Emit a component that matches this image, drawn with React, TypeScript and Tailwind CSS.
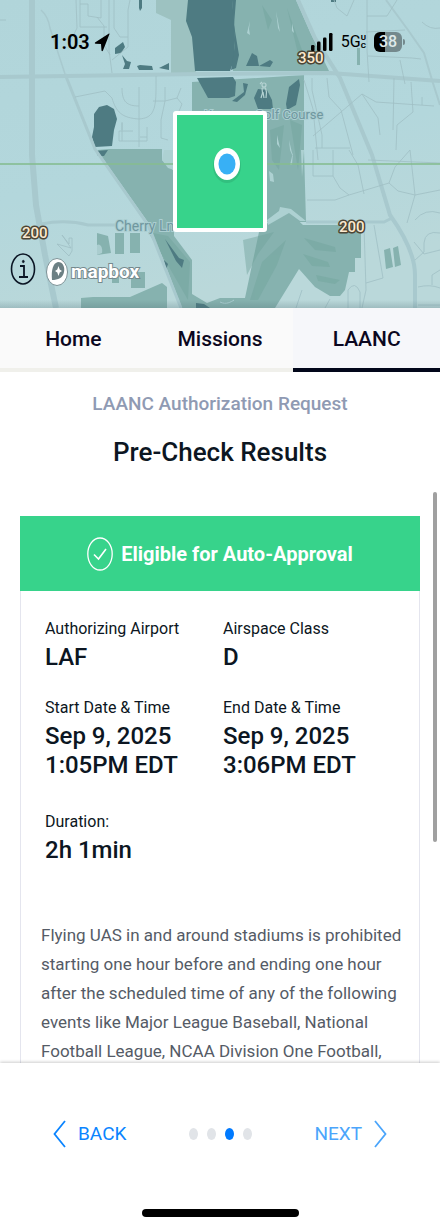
const tabs = [
  { name: 'Home', active: false },
  { name: 'Missions', active: false },
  { name: 'LAANC', active: true },
]

const details = [
  { label: 'Authorizing Airport', value: ['LAF'] },
  { label: 'Airspace Class', value: ['D'] },
  { label: 'Start Date & Time', value: ['Sep 9, 2025', '1:05PM EDT'] },
  { label: 'End Date & Time', value: ['Sep 9, 2025', '3:06PM EDT'] },
]

const steps = [1, 2, 3, 4]

function Map() {
  return (
    <svg
      viewBox="0 0 440 308"
      preserveAspectRatio="xMidYMid slice"
      className="block h-full w-full"
      aria-label="Map of the flight area"
    >
      <defs>
        <linearGradient id="ground" x1="0" y1="0" x2="0.3" y2="1">
          <stop offset="0" stopColor="#b1d5da" />
          <stop offset="0.6" stopColor="#b3d7dc" />
          <stop offset="1" stopColor="#bad8da" />
        </linearGradient>
        <linearGradient id="edge" x1="0" y1="0" x2="0" y2="1">
          <stop offset="0" stopColor="#4a6a70" stopOpacity="0" />
          <stop offset="1" stopColor="#4a6a70" stopOpacity="0.25" />
        </linearGradient>
      </defs>
      <rect width="440" height="308" fill="url(#ground)" />

      {/* Parks */}
      <path d="M156 0V13L171 20V73H196L190 0Z" fill="#9dc2c1" />
      <g fill="#86b2af">
        <path d="M230 0H296L310 32L329 71H233Z" />
        <path d="M192 82L304 75V150L306 222H267V111H192Z" />
        <path d="M109 149H162V160L174 171V236L192 260V294L207 303L220 298H245L259 232L282 208L290 213L303 225H361V258H355V272H349L345 290L340 296H330L315 287L299 269L275 308H182L150 225L97 150Z" />
        <path d="M97 233L108 236L111 253L97 255ZM115 233H124V254H115ZM130 233H140V253H130ZM131 272H145V288H131ZM112 275H119V283H112Z" />
        <path d="M81 308V298L93 297H130L162 283L167 287V308Z" />
        <path d="M384 250L390 248L393 267L386 269ZM393 248L398 246L401 265L395 267Z" />
        <path d="M110 149H162V156H107Z" />
        <path d="M357 48H360V65H357Z" />
      </g>
      <g fill="#71a39c" opacity="0.45">
        <path d="M243 240L274 232L258 254L247 275ZM262 262L286 240L277 265L258 300L250 300ZM304 238L335 247L336 252L315 250ZM303 254L328 262L330 267L312 266ZM316 275L340 280L335 284L318 281Z" />
        <path d="M262 5L272 20L268 30ZM287 8L302 50L300 62ZM270 130L284 125L279 170L272 160ZM290 120L302 125L298 170Z" />
        <path d="M148 232L168 236L190 262L188 300L165 260Z" />
      </g>

      {/* Water */}
      <g fill="#4e7b82">
        <path d="M188 0H232L234 20L235 40L234 60L230 71H195L192 37L186 21Z" />
        <path d="M197 78L233 77L236 82L235 96L229 98L208 98Z" />
        <path d="M94 114L99 107L107 105L114 109L117 119L114 130L112 146L95 147L92 137L94 127Z" />
        <path d="M96 151L108 150L104 156L98 156Z" />
        <path d="M115 48L123 42L125 47L121 53L115 54ZM122 55L127 61L131 62L129 69L123 69L125 64ZM137 66L140 65L152 66L153 70L139 70ZM159 68L169 63V70Z" />
        <path d="M139 0H142V8L140 11L139 8Z" />
        <path d="M232 0L236 0L234 25L239 55L236 68L231 70L235 45Z" />
        <path d="M246 66L252 53L257 56L259 66ZM259 66L270 60L273 62L270 67Z" />
        <path d="M232 101L244 92L243 83L248 84L245 95L237 102ZM258 89L267 90L272 100L273 109H258L254 98ZM289 87L299 79L300 85L296 105L287 110L286 104Z" />
        <path d="M165 239L179 258L184 260L182 268L176 261ZM164 260L168 264L166 270ZM196 303L204 304L210 308H196Z" />
        <path d="M331 0H336V2H331Z" />
      </g>
      <g fill="#add1d2">
        <path d="M247 33L250 21L249 29L250 35ZM276 11L280 32L278 28ZM292 23L294 33L292 31ZM277 135L280 148L277 144ZM289 140L293 157L290 150ZM269 171L273 174L274 182L270 181ZM290 165L293 152L292 165ZM301 150L304 150L302 177Z" />
        <path d="M267 220L279 211L280 207L291 209L306 221H300L289 213L268 225Z" />
        <path d="M164 150H174V170L168 168L162 160Z" />
      </g>
      <path d="M97 245C100 243 103 247 102 253L97 255Z" fill="#aacdcf" />
      <path d="M220 302C226 305 231 302 234 300" fill="none" stroke="#abced1" strokeWidth="1" />

      {/* Roads */}
      <g fill="none" stroke="#a8c9ce">
        <path d="M32 0V155L36 205L45 255L56 308" strokeWidth="6" />
        <path d="M0 77L200 74L330 73L440 81" strokeWidth="4" />
        <path d="M41 10Q48 16 50 28L65 74" strokeWidth="1.5" />
        <path d="M65 74L95 149L148 225L181 308" strokeWidth="3" />
        <path d="M298 0L315 38L340 78L372 155L390 215Q415 250 415 275V308" strokeWidth="4" />
        <path d="M386 0L408 30L424 53L432 80L440 105" strokeWidth="2" />
        <path d="M306 222H384L392 218" strokeWidth="3" />
        <path d="M41 224Q66 219 88 225H116" strokeWidth="3" />
      </g>
      <g fill="none" stroke="#9fbfc4" strokeWidth="0.8">
        <path d="M76 0L77 28L70 42M80 0V27H107M80 4H88V16L101 18V0M97 17L104 26V45L110 55M109 0V50L112 73M114 0V28L120 37H128V10L130 0M112 60L128 47V37M0 20H6" />
        <path d="M75 97L105 91L112 98C116 112 122 118 139 119C152 118 156 112 156 89V76M122 88C122 102 127 106 139 106M139 87V147M165 87V101M153 101H165L177 98L181 88M165 101L161 120V138L168 140M177 98L182 104L177 116V137L173 140M122 123V130M119 141V131H133M122 141V122M119 141H147V127M140 137H147" />
        <path d="M312 78V90L322 135V148M327 78L329 97L341 110L353 155M304 80L313 109L318 160M313 136L362 94L376 102L434 106M367 0V50L369 82M367 16H387L397 0M366 32L405 30M368 56L412 58L421 59M411 82L413 112L397 125L396 150M362 94L378 118L380 135M315 148H350M394 78L393 130M334 0L337 8L347 16L354 0M422 97V105M400 60L405 84M440 28Q430 30 422 22" />
        <path d="M313 150V176H333V150M333 176L340 188L349 195L389 183L395 167M349 150L358 165L364 194M307 200H335L349 195M389 183L398 191L415 195L440 190M395 167L410 150M410 150L415 195L407 223M368 160L440 163M364 226L366 290L362 308M374 225L383 278L366 283M415 220Q425 208 440 213M440 233Q425 230 424 243V252L415 260M414 242L424 254L440 250M418 287Q430 284 440 288M432 285V275L440 270M418 305H440M348 308V290Q355 280 360 292V308M302 290L296 308M330 299L325 308" />
        <path d="M62 235L71 248L57 244L69 256L72 251V238H69V244Z" />
      </g>

      <path d="M0 164H440" stroke="#86bd92" strokeWidth="2" opacity="0.8" />

      {/* Place names */}
      <g fill="#6f979f" stroke="#abced1" strokeWidth="2" paintOrder="stroke">
        <text x="204" y="119" fontSize="13">Kampen Golf Course</text>
        <text x="115" y="231" fontSize="14">Cherry Ln</text>
      </g>
      <g fill="none" stroke="#b5d3d3" strokeWidth="1.2">
        <circle cx="264" cy="85" r="2" />
        <path d="M260 84L262 82M262 88H265.500L266.500 92L266 98M262 88L262.500 93L261 98M263 92L264 98" />
      </g>

      {/* Authorization grid cell */}
      <rect x="175" y="113" width="90" height="117" rx="1" fill="#37d38b" stroke="#fff" strokeWidth="4" />
      <ellipse cx="227" cy="166" rx="14" ry="17" fill="#24885c" opacity="0.25" />
      <ellipse cx="227" cy="164" rx="13" ry="16" fill="#fff" />
      <ellipse cx="227" cy="164" rx="8.5" ry="10.5" fill="#38b0f5" />

      {/* Altitude ceilings */}
      <g
        fill="#fbe9cf"
        stroke="#4c4535"
        strokeWidth="3"
        strokeLinejoin="round"
        paintOrder="stroke"
        fontSize="15"
        fontWeight="500"
      >
        <text x="298" y="63">350</text>
        <text x="22" y="238">200</text>
        <text x="339" y="232">200</text>
      </g>

      {/* Attribution */}
      <g fill="none" stroke="#0b1524" strokeWidth="1.6">
        <ellipse cx="23" cy="269" rx="11.5" ry="15" />
        <path d="M20 266H24V277M19 277H28" strokeWidth="1.8" />
        <ellipse cx="23.3" cy="261.5" rx="1" ry="1.2" fill="#0b1524" strokeWidth="0.6" />
      </g>
      <ellipse cx="57" cy="272" rx="10.5" ry="13.5" fill="#fff" stroke="#7d9296" strokeWidth="1" />
      <path d="M52 280C51 270 53 263 58 262C63 262 65 267 64 272C63 278 58 280 52 280Z" fill="#6c8084" />
      <path d="M58.500 266L59.700 269.500L62 271L59.700 272.500L58.500 276L57.300 272.500L55 271L57.300 269.500Z" fill="#fff" />
      <text
        x="71"
        y="278"
        fontSize="19"
        fontWeight="700"
        fill="#fff"
        stroke="#75898d"
        strokeWidth="2"
        paintOrder="stroke"
      >
        mapbox
      </text>
      <rect y="300" width="440" height="8" fill="url(#edge)" />
    </svg>
  )
}

function StatusBar() {
  return (
    <div className="absolute inset-x-0 top-7 flex h-7 items-center justify-between pr-[35px] pl-[50px] text-black">
      <div className="flex items-center gap-1">
        <span className="text-xl font-semibold">1:03</span>
        <svg viewBox="0 0 16 20" className="h-5 w-4">
          <path d="M15 1.500L1 10.500Q0.300 11.500 1.500 11.800L7 12L7.500 18.500Q8 19.800 9 18.500L15.500 2Q15.600 1.200 15 1.500Z" />
        </svg>
      </div>
      <div className="flex items-center gap-2">
        <svg viewBox="0 0 22 18" className="h-[18px] w-[22px]">
          <rect x="0" y="12" width="3.500" height="6" rx="1.200" />
          <rect x="6" y="8.500" width="3.500" height="9.500" rx="1.200" />
          <rect x="12" y="4.500" width="3.500" height="13.500" rx="1.200" />
          <rect x="18" y="0" width="3.500" height="18" rx="1.200" />
        </svg>
        <div className="flex items-center">
          <span className="text-base">5G</span>
          <span className="flex flex-col text-[8px] leading-[8px] font-bold">
            <span>U</span>
            <span>C</span>
          </span>
        </div>
        <div className="flex items-center">
          <div className="flex h-5 w-7 items-center justify-center rounded-md bg-linear-to-r from-black from-38% to-[#74898d] to-38% text-base leading-5 font-medium text-[#dfe9ea]">
            38
          </div>
          <div className="ml-px h-1.5 w-0.5 rounded-r bg-[#74898d]" />
        </div>
      </div>
    </div>
  )
}

export default function App() {
  return (
    <div className="flex h-screen flex-col overflow-hidden bg-white font-[Roboto,sans-serif] text-[#0c1622]">
      <header className="relative h-[308px] shrink-0">
        <Map />
        <StatusBar />
      </header>

      <nav className="grid h-16 shrink-0 grid-cols-3">
        {tabs.map((tab) => (
          <a
            key={tab.name}
            href="#"
            className={
              tab.active
                ? 'flex items-center justify-center border-b-4 border-[#02071a] bg-[#f6f7fa] pt-1 text-[21px] font-medium text-[#0b0720]'
                : 'flex items-center justify-center border-b-4 border-[#f0f0eb] bg-[#fafafa] pt-1 text-[21px] font-medium text-[#0b0720]'
            }
          >
            {tab.name}
          </a>
        ))}
      </nav>

      <main className="relative min-h-0 flex-1 overflow-hidden px-5 pt-4">
        <p className="text-center text-[19px] leading-8 font-medium text-[#8f9ab3]">LAANC Authorization Request</p>
        <h1 className="mt-3 text-center text-[26px] leading-10 font-medium">Pre-Check Results</h1>

        <section className="mt-11 border-x border-[#e4e5ee]">
          <div className="-mx-px flex h-[75px] items-center justify-center gap-2 bg-[#37d38b] text-white">
            <svg viewBox="0 0 26 34" className="h-[34px] w-[26px]" fill="none" stroke="currentColor">
              <ellipse cx="13" cy="17" rx="12.2" ry="16" strokeWidth="1.300" />
              <path d="M7 17.500L11.500 22L19 12" strokeWidth="1.600" />
            </svg>
            <h2 className="text-xl font-bold">Eligible for Auto-Approval</h2>
          </div>

          <dl className="grid grid-cols-[178px_1fr] gap-y-[22px] px-6 pt-6">
            {details.map((item) => (
              <div key={item.label}>
                <dt className="text-base leading-7">{item.label}</dt>
                {item.value.map((line) => (
                  <dd key={line} className="text-2xl leading-[29px] font-medium">{line}</dd>
                ))}
              </div>
            ))}
            <div className="pt-1.5">
              <dt className="text-base leading-7">Duration:</dt>
              <dd className="text-2xl leading-[29px] font-medium">2h 1min</dd>
            </div>
          </dl>

          <p className="mt-14 pr-2 pl-5 text-[17px] leading-[29px] text-[#555b66]">
            Flying UAS in and around stadiums is prohibited starting one hour before and ending one hour after the
            scheduled time of any of the following events like Major League Baseball, National Football League, NCAA
            Division One Football,
          </p>
        </section>

        {/* Scroll thumb */}
        <div className="absolute top-[120px] right-[3px] h-[350px] w-1 rounded-full bg-[#a0a0a0]" />
      </main>

      <footer className="relative shrink-0 bg-white shadow-[0_-1px_3px_rgba(0,0,0,0.2)]">
        <div className="flex h-[142px] items-center justify-between px-[53px]">
          <button type="button" className="flex items-center gap-3 text-[19px] text-[#0a84ff]">
            <svg viewBox="0 0 13 28" className="h-7 w-[13px]" fill="none" stroke="currentColor" strokeWidth="1.800">
              <path d="M12 1L1.500 14L12 27" />
            </svg>
            BACK
          </button>
          <div className="flex items-center gap-[9px]">
            {steps.map((step) => (
              <span
                key={step}
                className={
                  step === 3
                    ? 'h-3 w-[9px] rounded-[50%] bg-[#007aff]'
                    : 'h-3 w-[9px] rounded-[50%] bg-[#e1e4e8]'
                }
              />
            ))}
          </div>
          <button type="button" className="flex items-center gap-3 text-[19px] text-[#4ba5fb]">
            NEXT
            <svg viewBox="0 0 13 28" className="h-7 w-[13px]" fill="none" stroke="currentColor" strokeWidth="1.800">
              <path d="M1 1L11.500 14L1 27" />
            </svg>
          </button>
        </div>
        <div className="mx-auto mt-1 mb-3 h-2 w-[157px] rounded-full bg-black" />
      </footer>
    </div>
  )
}
